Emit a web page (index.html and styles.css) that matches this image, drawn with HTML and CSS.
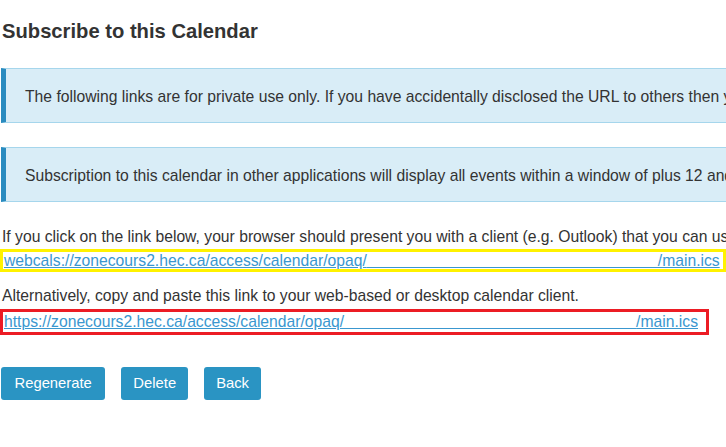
FILE: index.html
```html
<!DOCTYPE html>
<html lang="en">
<head>
<meta charset="utf-8">
<title>Subscribe to this Calendar</title>
<link rel="stylesheet" href="styles.css">
</head>
<body>
<div class="page">
  <h1 class="title">Subscribe to this Calendar</h1>
  <div class="alert alert-first">The following links are for private use only. If you have accidentally disclosed the URL to others then you should regenerate it.</div>
  <div class="alert alert-second">Subscription to this calendar in other applications will display all events within a window of plus 12 and minus 6 months.</div>
  <p class="text text-first">If you click on the link below, your browser should present you with a client (e.g. Outlook) that you can use to subscribe to this calendar.</p>
  <div class="mark mark-yellow"><a class="link" href="#">webcals://zonecours2.hec.ca/access/calendar/opaq/<span class="gap gap-yellow"></span>/main.ics</a></div>
  <p class="text text-second">Alternatively, copy and paste this link to your web-based or desktop calendar client.</p>
  <div class="mark mark-red"><a class="link" href="#">https://zonecours2.hec.ca/access/calendar/opaq/<span class="gap gap-red"></span>/main.ics</a></div>
  <div class="actions">
    <button class="btn btn-wide" type="button">Regenerate</button>
    <button class="btn" type="button">Delete</button>
    <button class="btn" type="button">Back</button>
  </div>
</div>
</body>
</html>
```
FILE: styles.css
```css
html, body {
  margin: 0;
  padding: 0;
  background: #ffffff;
  overflow: hidden;
}

.page {
  width: 1000px;
  padding-left: 2px;
  font-family: "Liberation Sans", Arial, sans-serif;
  font-size: 15.7px;
  line-height: 22.4px;
  color: #333333;
}

.title {
  margin: 20px 0 26px 0;
  font-size: 20.2px;
  line-height: 22px;
  font-weight: bold;
  color: #333333;
}

.alert {
  margin-left: -1px;
  background: #d9edf7;
  border: 1px solid #a6d6ec;
  border-left: 5px solid #2a8bbf;
  padding: 17px 0 14px 19px;
  white-space: nowrap;
  color: #333333;
}

.alert-first {
  margin-bottom: 23.6px;
}

.alert-second {
  margin-bottom: 24px;
}

.text {
  margin: 0;
  white-space: nowrap;
}

.text-first {
  margin-bottom: 0;
}

.text-second {
  margin-top: 13.5px;
  margin-bottom: 1px;
}

.mark {
  margin-left: -2px;
  border: 3px solid;
  padding-left: 1px;
  line-height: 17px;
  white-space: nowrap;
}

.mark-yellow {
  width: 719px;
  border-color: #fff200;
}

.mark-red {
  width: 702px;
  border-color: #ec1c24;
  line-height: 20px;
}

.link {
  color: #3a97cf;
  text-decoration: underline;
}

.gap {
  display: inline-block;
  height: 1px;
  background: currentColor;
  vertical-align: -2px;
}

.gap-yellow {
  width: 291px;
}

.gap-red {
  width: 292px;
}

.actions {
  display: flex;
  gap: 16px;
  margin-top: 32px;
  margin-left: -1px;
}

.btn {
  height: 33px;
  padding: 0 12px;
  border: none;
  border-radius: 3px;
  background: #2a94c3;
  color: #ffffff;
  font-family: "Liberation Sans", Arial, sans-serif;
  font-size: 14.8px;
  line-height: 21px;
  cursor: pointer;
}

.btn-wide {
  padding: 0 13.5px;
}
```
